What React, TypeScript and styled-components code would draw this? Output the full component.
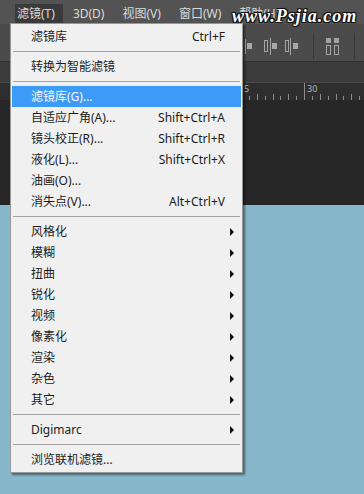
import React from 'react';
import styled, { createGlobalStyle } from 'styled-components';

const GlobalStyle = createGlobalStyle`
  html, body {
    margin: 0;
    padding: 0;
    background: #86b7ca;
  }
  body {
    font-family: "Noto Sans", "Noto Sans CJK SC", sans-serif;
  }
`;

const Window = styled.div`
  position: relative;
  width: 364px;
  height: 494px;
  overflow: hidden;
  display: flex;
  flex-direction: column;
  background: #86b7ca;
`;

const MenuBar = styled.div`
  height: 23px;
  flex-shrink: 0;
  background: #535353;
  display: flex;
  align-items: flex-end;
  gap: 8px;
  padding-left: 15px;
`;

const MenuTitle = styled.div<{ $open?: boolean }>`
  height: 19px;
  line-height: 19px;
  padding: 0 8px 0 2px;
  font-size: 12px;
  color: #dadada;
  white-space: nowrap;
  background: ${({ $open }) => ($open ? '#3a3a3a' : 'transparent')};
`;

const Toolbar = styled.div`
  height: 39px;
  flex-shrink: 0;
  box-sizing: border-box;
  background: #4b4b4b;
  border-top: 1px solid #555;
  border-bottom: 1px solid #333;
  display: flex;
  align-items: center;
  padding: 7px 0 0 244px;
`;

const ToolIcon = styled.svg<{ $gap?: number }>`
  flex-shrink: 0;
  margin-left: ${({ $gap }) => $gap ?? 0}px;
`;

const ToolDivider = styled.div<{ $gap: number }>`
  width: 1px;
  height: 26px;
  flex-shrink: 0;
  background: #383838;
  margin-left: ${({ $gap }) => $gap}px;
`;

const TabStrip = styled.div`
  height: 20px;
  flex-shrink: 0;
  background: #3b3b3b;
`;

const Ruler = styled.div`
  height: 18px;
  flex-shrink: 0;
  background: #2e2e2e;
  border-top: 1px solid #4a4a4a;
  box-sizing: border-box;
`;

const Canvas = styled.div`
  height: 105px;
  flex-shrink: 0;
  background: #272727;
`;

const Desktop = styled.div`
  flex: 1;
  background: #86b7ca;
`;

const Watermark = styled.div`
  position: absolute;
  top: 6px;
  left: 232px;
  font-family: "Liberation Serif", "DejaVu Serif", serif;
  font-style: italic;
  font-weight: bold;
  font-size: 18px;
  letter-spacing: 1px;
  color: #fff;
  text-shadow: -1px -1px 0 #111, 1px -1px 0 #111, -1px 1px 0 #111, 1px 1px 0 #111, 0 0 2px #000;
  white-space: nowrap;
`;

const Dropdown = styled.div`
  position: absolute;
  left: 10px;
  top: 23px;
  width: 233px;
  box-sizing: border-box;
  background: #f0f0f0;
  border: 1px solid #979797;
  padding: 2px 1px;
  box-shadow: 2px 2px 2px rgba(0, 0, 0, 0.45);
  font-family: "Noto Sans", "Noto Sans CJK SC", sans-serif;
  font-size: 12px;
`;

const Item = styled.div<{ $active?: boolean }>`
  height: 21px;
  line-height: 21px;
  display: flex;
  align-items: center;
  padding-left: 19px;
  color: ${({ $active }) => ($active ? '#f2f7ff' : '#1c1c1c')};
  background: ${({ $active }) => ($active ? '#3c9bf6' : 'transparent')};
  white-space: nowrap;
`;

const Label = styled.span`
  flex: 1;
`;

const Shortcut = styled.span`
  text-align: right;
`;

const ArrowSlot = styled.span`
  width: 16px;
  height: 21px;
  flex-shrink: 0;
  display: flex;
  align-items: center;
`;

const Arrow = styled.span`
  margin-left: 5px;
  width: 0;
  height: 0;
  border-top: 4px solid transparent;
  border-bottom: 4px solid transparent;
  border-left: 4px solid #111;
`;

const Separator = styled.div`
  height: 1px;
  margin: 4px 1px;
  background: #a3a3a3;
`;

type Entry =
  | { sep: true }
  | { sep?: false; label: string; shortcut?: string; sub?: boolean; active?: boolean };

const entries: Entry[] = [
  { label: '滤镜库', shortcut: 'Ctrl+F' },
  { sep: true },
  { label: '转换为智能滤镜' },
  { sep: true },
  { label: '滤镜库(G)...', active: true },
  { label: '自适应广角(A)...', shortcut: 'Shift+Ctrl+A' },
  { label: '镜头校正(R)...', shortcut: 'Shift+Ctrl+R' },
  { label: '液化(L)...', shortcut: 'Shift+Ctrl+X' },
  { label: '油画(O)...' },
  { label: '消失点(V)...', shortcut: 'Alt+Ctrl+V' },
  { sep: true },
  { label: '风格化', sub: true },
  { label: '模糊', sub: true },
  { label: '扭曲', sub: true },
  { label: '锐化', sub: true },
  { label: '视频', sub: true },
  { label: '像素化', sub: true },
  { label: '渲染', sub: true },
  { label: '杂色', sub: true },
  { label: '其它', sub: true },
  { sep: true },
  { label: 'Digimarc', sub: true },
  { sep: true },
  { label: '浏览联机滤镜...' },
];

const menus = ['滤镜(T)', '3D(D)', '视图(V)', '窗口(W)', '帮助(H)'];

const RulerMarks: React.FC = () => {
  const ticks: React.ReactNode[] = [];
  const step = 63 / 8;
  for (let i = -8; i <= 8; i++) {
    const x = Math.round(304 + i * step) + 0.5;
    const long = i % 8 === 0;
    const mid = Math.abs(i % 2) === 1 ? false : true;
    const top = long ? 0 : mid ? 11 : 13;
    ticks.push(<line key={i} x1={x} x2={x} y1={top} y2={17} stroke="#8c8c8c" strokeWidth={1} />);
  }
  return (
    <svg width="364" height="17" viewBox="0 0 364 17">
      {ticks}
      <text x="244" y="9" fontSize="9" fill="#b8b8b8" fontFamily="Noto Sans, sans-serif">5</text>
      <text x="307" y="9" fontSize="9" fill="#b8b8b8" fontFamily="Noto Sans, sans-serif">30</text>
    </svg>
  );
};

const App: React.FC = () => {
  return (
    <>
      <GlobalStyle />
      <Window>
        <MenuBar>
          {menus.map((m, i) => (
            <MenuTitle key={m} $open={i === 0}>{m}</MenuTitle>
          ))}
        </MenuBar>

        <Toolbar>
          <ToolIcon width="8" height="17" viewBox="0 0 8 17">
            <line x1="1.5" y1="1" x2="1.5" y2="16" stroke="#a4a4a4" />
            <rect x="3" y="5" width="5" height="6" fill="#a8a8a8" />
          </ToolIcon>
          <ToolIcon $gap={12} width="13" height="17" viewBox="0 0 13 17">
            <rect x="0.5" y="2.5" width="3" height="11" fill="none" stroke="#a4a4a4" />
            <line x1="6.5" y1="0" x2="6.5" y2="17" stroke="#a4a4a4" />
            <rect x="8" y="5" width="5" height="6" fill="#a8a8a8" />
          </ToolIcon>
          <ToolIcon $gap={8} width="13" height="17" viewBox="0 0 13 17">
            <rect x="0.5" y="2.5" width="3" height="11" fill="none" stroke="#a4a4a4" />
            <line x1="5.5" y1="0" x2="5.5" y2="17" stroke="#a4a4a4" />
            <rect x="8" y="5" width="5" height="6" fill="#a8a8a8" />
          </ToolIcon>
          <ToolDivider $gap={15} />
          <ToolIcon $gap={11} width="15" height="17" viewBox="0 0 15 17">
            <rect x="1" y="0" width="5" height="5" fill="#a2a2a2" />
            <rect x="1.5" y="7.5" width="4" height="9" fill="none" stroke="#a4a4a4" />
            <rect x="9" y="0" width="5" height="5" fill="#a2a2a2" />
            <rect x="9.5" y="7.5" width="4" height="9" fill="none" stroke="#a4a4a4" />
          </ToolIcon>
          <ToolDivider $gap={14} />
        </Toolbar>

        <TabStrip />
        <Ruler>
          <RulerMarks />
        </Ruler>
        <Canvas />
        <Desktop />

        <Watermark>www.Psjia.com</Watermark>

        <Dropdown>
          {entries.map((e, i) =>
            e.sep ? (
              <Separator key={i} />
            ) : (
              <Item key={i} $active={e.active}>
                <Label>{e.label}</Label>
                {e.shortcut && <Shortcut>{e.shortcut}</Shortcut>}
                <ArrowSlot>{e.sub && <Arrow />}</ArrowSlot>
              </Item>
            )
          )}
        </Dropdown>
      </Window>
    </>
  );
};

export default App;
